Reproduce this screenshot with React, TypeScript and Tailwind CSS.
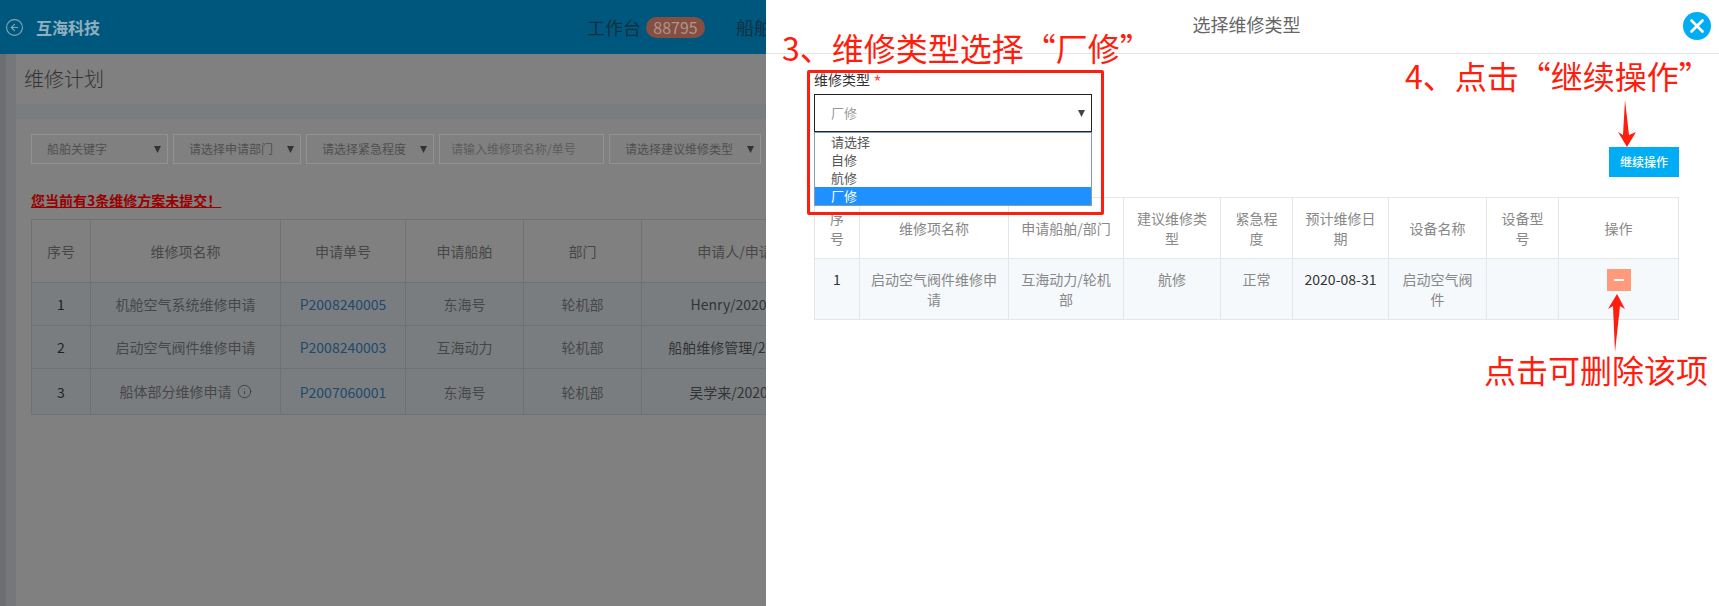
import { CircleArrowLeft, Info, X } from "lucide-react";

const filters = [
  { label: "船舶关键字", w: "w-[137px]" },
  { label: "请选择申请部门", w: "w-[128px]" },
  { label: "请选择紧急程度", w: "w-[128px]" },
];

const plans = [
  { no: 1, name: "机舱空气系统维修申请", code: "P2008240005", ship: "东海号", dept: "轮机部", who: "Henry/2020-08-24", h: "h-[43px]" },
  { no: 2, name: "启动空气阀件维修申请", code: "P2008240003", ship: "互海动力", dept: "轮机部", who: "船舶维修管理/2020-08-24", h: "h-[43px]" },
  { no: 3, name: "船体部分维修申请", code: "P2007060001", ship: "东海号", dept: "轮机部", who: "吴学来/2020-07-06", h: "h-[46px]", info: true },
];

const leftHead = ["序号", "维修项名称", "申请单号", "申请船舶", "部门", "申请人/申请时间"];
const drawerHead = ["序号", "维修项名称", "申请船舶/部门", "建议维修类型", "紧急程度", "预计维修日期", "设备名称", "设备型号", "操作"];
const options = ["请选择", "自修", "航修", "厂修"];

const Caret = ({ className }: { className: string }) => (
  <svg viewBox="0 0 7 7" className={`absolute w-[7px] h-[7px] ${className}`}>
    <polygon points="0,0 7,0 3.5,7" fill="currentColor" />
  </svg>
);

const Filter = ({ label, w }: { label: string; w: string }) => (
  <div className={`relative ${w} h-[30px] flex items-center pl-[15px] border border-[#909294] text-xs text-[#4f4f4f]`}>
    {label}
    <Caret className="right-[6px] top-[11px] text-[#333]" />
  </div>
);

export default function App() {
  return (
    <div className="relative flex w-[1719px] h-[606px] overflow-hidden font-['Noto_Sans_CJK_SC',sans-serif]">
      {/* dimmed page behind the drawer */}
      <div className="w-[766px] shrink-0 flex flex-col bg-[#7a7d80] overflow-hidden">
        <div className="h-[54px] shrink-0 flex items-center bg-[#00577e] whitespace-nowrap">
          <CircleArrowLeft size={19} strokeWidth={1.4} className="ml-[5px] shrink-0 text-[#7fa6b8]" />
          <span className="ml-[12px] shrink-0 text-base font-bold text-[#8fb0bf]">互海科技</span>
          <span className="ml-[487px] shrink-0 text-lg text-[#10303f]">工作台</span>
          <span className="ml-[5px] h-[21px] w-[59px] shrink-0 flex items-center justify-center rounded-full bg-[#874f41] text-base text-[#a8978f]">88795</span>
          <span className="ml-[31px] shrink-0 text-lg text-[#10303f]">船舶</span>
        </div>

        <div className="flex flex-1">
          <div className="w-[16px] shrink-0 flex bg-[#75777a]">
            <div className="w-[6px] bg-[#6c6e70]" />
          </div>
          <div className="flex-1 flex flex-col min-w-0">
            <div className="h-[50px] shrink-0 flex items-center pl-[8px] bg-[#808080] text-xl font-light text-[#333]">维修计划</div>
            <div className="mt-[15px] flex-1 bg-[#808080] pt-[15px] pl-[15px] overflow-hidden">
              <div className="flex gap-[5px] w-[900px]">
                {filters.map((f) => (
                  <Filter key={f.label} label={f.label} w={f.w} />
                ))}
                <div className="w-[165px] h-[30px] flex items-center pl-[11px] border border-[#909294] text-xs text-[#5c5c5c]">请输入维修项名称/单号</div>
                <Filter label="请选择建议维修类型" w="w-[152px]" />
              </div>
              <div className="mt-[26px] h-[20px] leading-[20px] text-sm font-bold text-[#990000] underline">您当前有3条维修方案未提交！</div>
              <table className="mt-[9px] table-fixed border-collapse w-[825px] text-sm text-center text-[#474747]">
                <colgroup>
                  <col className="w-[59px]" />
                  <col className="w-[190px]" />
                  <col className="w-[125px]" />
                  <col className="w-[118px]" />
                  <col className="w-[118px]" />
                  <col className="w-[215px]" />
                </colgroup>
                <thead>
                  <tr className="h-[63px]">
                    {leftHead.map((h) => (
                      <th key={h} className="border border-[#6f7275] font-normal">{h}</th>
                    ))}
                  </tr>
                </thead>
                <tbody>
                  {plans.map((p) => (
                    <tr key={p.no} className={`${p.h} bg-[#7a7d80]`}>
                      <td className="border border-[#6f7275] text-[#222]">{p.no}</td>
                      <td className="border border-[#6f7275]">
                        {p.name}
                        {p.info && <Info size={15} strokeWidth={1.2} className="inline ml-[5px] mb-[3px] text-[#333]" />}
                      </td>
                      <td className="border border-[#6f7275] text-[#20496c]">{p.code}</td>
                      <td className="border border-[#6f7275]">{p.ship}</td>
                      <td className="border border-[#6f7275]">{p.dept}</td>
                      <td className="border border-[#6f7275] whitespace-nowrap text-[#333]">{p.who}</td>
                    </tr>
                  ))}
                </tbody>
              </table>
            </div>
          </div>
        </div>
      </div>

      {/* drawer */}
      <div className="relative flex-1 flex flex-col bg-white">
        <div className="h-[54px] shrink-0 flex items-center justify-center pl-[7px] pb-[5px] border-b border-[#e5e5e5] text-lg text-[#666]">选择维修类型</div>
        <button className="absolute left-[917px] top-[12px] w-[28px] h-[28px] flex items-center justify-center rounded-full bg-[#00adf5] text-white">
          <X size={22} strokeWidth={3} />
        </button>

        <div className="pt-[15px] pl-[48px] pr-[41px] flex flex-col">
          <div className="h-[20px] leading-[20px] text-sm text-[#333]">
            维修类型 <span className="text-lg leading-none align-[-4px] text-[#ff4d4d]">*</span>
          </div>
          <div className="relative mt-[5px] w-[278px]">
            <div className="h-[38px] flex items-center pl-[16px] border border-[#222] text-[13px] text-[#999]">厂修</div>
            <Caret className="right-[7px] top-[16px] text-[#444]" />
            <div className="absolute left-0 right-0 top-[38px] z-10 border border-[#7f9db9] bg-white text-[13px] text-[#555]">
              {options.map((o) => (
                <div
                  key={o}
                  className={`h-[18px] leading-[18px] pl-[16px] ${o === "厂修" ? "bg-[#1e90ff] text-white" : ""}`}
                >
                  {o}
                </div>
              ))}
            </div>
          </div>
          <button className="mt-[15px] self-end w-[70px] h-[30px] bg-[#00adf5] text-xs font-medium text-white">继续操作</button>

          <table className="mt-[20px] table-fixed border-collapse w-[864px] text-sm text-center text-[#888]">
            <colgroup>
              <col className="w-[45px]" />
              <col className="w-[149px]" />
              <col className="w-[115px]" />
              <col className="w-[97px]" />
              <col className="w-[72px]" />
              <col className="w-[96px]" />
              <col className="w-[98px]" />
              <col className="w-[72px]" />
              <col className="w-[120px]" />
            </colgroup>
            <thead>
              <tr className="h-[61px]">
                {drawerHead.map((h) => (
                  <th key={h} className="border border-[#e4e7ea] px-[10px] font-normal leading-[20px]">{h}</th>
                ))}
              </tr>
            </thead>
            <tbody>
              <tr className="h-[61px] bg-[#f5f9fc] align-top leading-[20px]">
                <td className="border border-[#e4e7ea] px-[10px] pt-[10px] text-[#333]">1</td>
                <td className="border border-[#e4e7ea] px-[10px] pt-[10px]">启动空气阀件维修申请</td>
                <td className="border border-[#e4e7ea] px-[10px] pt-[10px]">互海动力/轮机部</td>
                <td className="border border-[#e4e7ea] px-[10px] pt-[10px]">航修</td>
                <td className="border border-[#e4e7ea] px-[10px] pt-[10px]">正常</td>
                <td className="border border-[#e4e7ea] px-[10px] pt-[10px] text-[#333]">2020-08-31</td>
                <td className="border border-[#e4e7ea] px-[10px] pt-[10px]">启动空气阀件</td>
                <td className="border border-[#e4e7ea] px-[10px] pt-[10px]"></td>
                <td className="border border-[#e4e7ea] px-[10px] pt-[10px]">
                  <button className="mx-auto w-[24px] h-[22px] flex items-center justify-center bg-[#ff9a7c]">
                    <span className="w-[10px] h-[2px] bg-white" />
                  </button>
                </td>
              </tr>
            </tbody>
          </table>
        </div>
      </div>

      {/* tutorial annotations drawn on top of the screenshot */}
      <div className="absolute left-[782px] top-[24px] text-[32px] leading-[46px] text-[#ff1d0e] whitespace-nowrap">3、维修类型选择“厂修”</div>
      <div className="absolute left-[1405px] top-[52px] text-[32px] leading-[46px] text-[#ff1d0e] whitespace-nowrap">4、点击“继续操作”</div>
      <div className="absolute left-[1484px] top-[346px] text-[32px] leading-[46px] text-[#ff1d0e] whitespace-nowrap">点击可删除该项</div>
      <div className="absolute left-[807px] top-[70px] w-[297px] h-[145px] z-20 border-[3px] border-[#ff1d0e] rounded-[2px]" />
      <svg viewBox="1610 95 30 55" className="absolute left-[1610px] top-[95px] w-[30px] h-[55px]">
        <polygon points="1625,100 1629,135 1636,132 1627,147 1618,132 1623,135" fill="#ff1d0e" />
      </svg>
      <svg viewBox="1600 290 30 65" className="absolute left-[1600px] top-[290px] w-[30px] h-[65px]">
        <polygon points="1617,294 1625,309 1620,306 1615,352 1613,306 1608,309" fill="#ff1d0e" />
      </svg>
    </div>
  );
}
